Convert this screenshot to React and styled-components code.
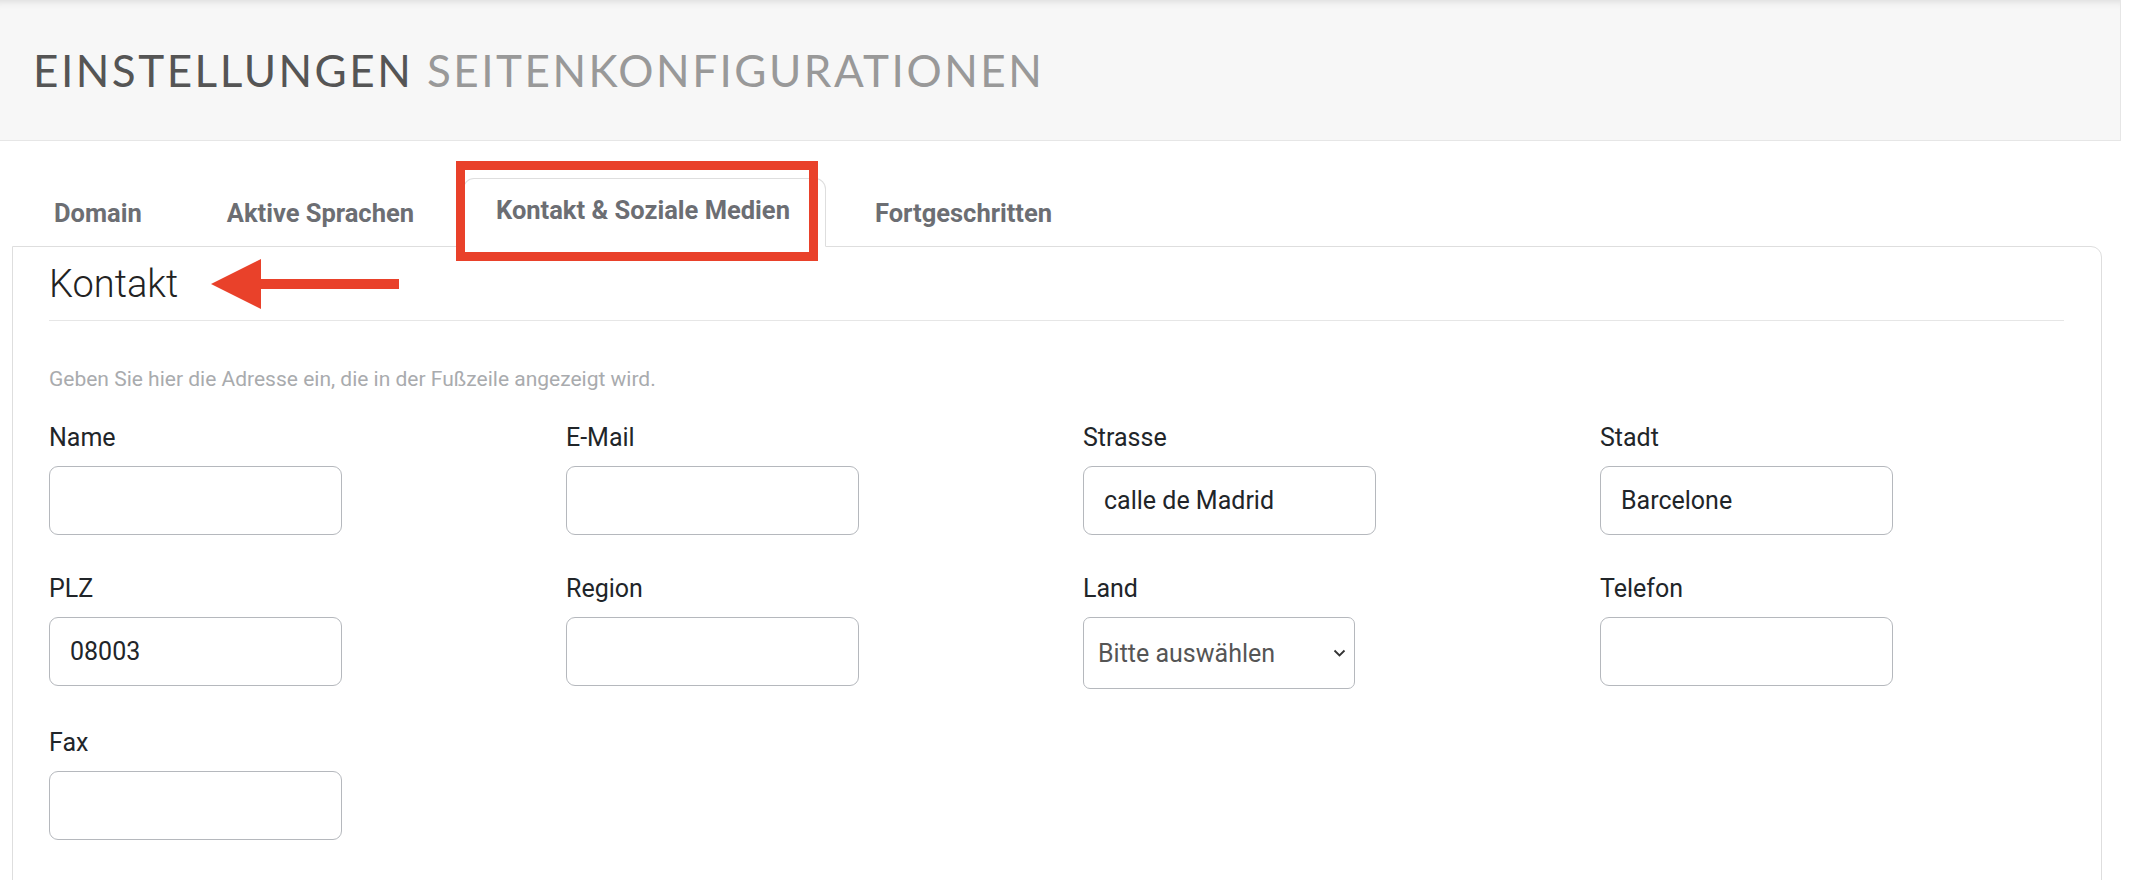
import styled, { createGlobalStyle } from "styled-components"

const GlobalStyle = createGlobalStyle`
    *{
        box-sizing:border-box;
    }
    body{
        margin:0;
        background:#fff;
        font-family:Roboto, "Liberation Sans", sans-serif;
        color:#212529;
    }
`

const PageHeader = styled.header`
    height:141px;
    margin-right:11px;
    background:#f7f7f7;
    border-bottom:1px solid #e6e6e6;
    border-right:1px solid #e6e6e6;
    box-shadow:inset 0 9px 9px -8px rgba(0,0,0,0.13);
    display:flex;
    align-items:center;
    padding-left:33px;
`
const PageTitle = styled.h1`
    margin:0;
    font-family:Lato, "Open Sans", sans-serif;
    font-weight:400;
    font-size:44px;
    letter-spacing:2.5px;
    color:#555;
    span{
        color:#999;
    }
`
const Main = styled.main`
    padding:37px 30px 0 12px;
`
const TabList = styled.ul`
    display:flex;
    list-style:none;
    margin:0;
    padding:0 0 0 6px;
    gap:13px;
`
const Tab = styled.li`
    position:relative;
    height:69px;
    margin-bottom:-1px;
    padding:${p => p.active ? "0 35px 6px 32px" : "0 35px"};
    display:flex;
    align-items:center;
    font-size:25.5px;
    font-weight:700;
    color:#6c6e73;
    border:1px solid ${p => p.active ? "#dedede" : "transparent"};
    border-bottom-color:${p => p.active ? "#fff" : "transparent"};
    border-radius:11px 11px 0 0;
    background:${p => p.active ? "#fff" : "transparent"};
`
const Highlight = styled.span`
    position:absolute;
    left:-8px;
    top:-18px;
    width:362px;
    height:100px;
    border:9px solid #e9412a;
    pointer-events:none;
`
const Panel = styled.section`
    border:1px solid #dedede;
    border-radius:0 11px 0 0;
    padding:15px 37px 60px 36px;
`
const SectionHead = styled.div`
    display:flex;
    align-items:center;
    padding-bottom:14px;
    border-bottom:1px solid #e6e6e6;
`
const SectionTitle = styled.h2`
    margin:0;
    font-size:38px;
    line-height:44px;
    font-weight:300;
    color:#222;
`
const Arrow = styled.svg`
    margin:-4px 0 -4px 33px;
    display:block;
`
const Hint = styled.p`
    margin:46px 0 31px;
    font-size:21px;
    line-height:25px;
    color:#a9abae;
`
const FieldGrid = styled.div`
    display:grid;
    grid-template-columns:repeat(4, 517px);
    row-gap:39px;
`
const Field = styled.div`
    display:flex;
    flex-direction:column;
`
const Label = styled.label`
    font-size:25px;
    line-height:30px;
    margin-bottom:13px;
    color:#212529;
`
const TextInput = styled.input`
    width:293px;
    height:69px;
    border:1px solid #b5b8bd;
    border-radius:9px;
    padding:0 20px;
    font-family:Roboto, "Liberation Sans", sans-serif;
    font-size:25px;
    color:#212529;
    background:#fff;
    outline:none;
`
const SelectWrap = styled.div`
    position:relative;
    width:272px;
`
const Select = styled.select`
    width:272px;
    height:72px;
    appearance:none;
    border:1px solid #b5b8bd;
    border-radius:7px;
    padding:0 14px;
    font-family:Roboto, "Liberation Sans", sans-serif;
    font-size:25px;
    color:#555;
    background:#fff;
    outline:none;
`
const Chevron = styled.svg`
    position:absolute;
    right:9px;
    top:32px;
    pointer-events:none;
`

const fields = [
    {label:"Name", value:""},
    {label:"E-Mail", value:""},
    {label:"Strasse", value:"calle de Madrid"},
    {label:"Stadt", value:"Barcelone"},
    {label:"PLZ", value:"08003"},
    {label:"Region", value:""},
    {label:"Land", select:true},
    {label:"Telefon", value:""},
    {label:"Fax", value:""},
]

const tabs = ["Domain","Aktive Sprachen","Kontakt & Soziale Medien","Fortgeschritten"]

const App = () => {
    return (
        <>
            <GlobalStyle/>
            <PageHeader>
                <PageTitle>EINSTELLUNGEN <span>SEITENKONFIGURATIONEN</span></PageTitle>
            </PageHeader>
            <Main>
                <TabList>
                    {tabs.map((t) => (
                        <Tab key={t} active={t === "Kontakt & Soziale Medien" ? 1 : 0}>
                            {t}
                            {t === "Kontakt & Soziale Medien" ? <Highlight/> : null}
                        </Tab>
                    ))}
                </TabList>
                <Panel>
                    <SectionHead>
                        <SectionTitle>Kontakt</SectionTitle>
                        <Arrow width="188" height="50" viewBox="0 0 188 50">
                            <polygon points="0,25 50,0 50,20 188,20 188,30 50,30 50,50" fill="#e9412a"/>
                        </Arrow>
                    </SectionHead>
                    <Hint>Geben Sie hier die Adresse ein, die in der Fußzeile angezeigt wird.</Hint>
                    <FieldGrid>
                        {fields.map((f) => (
                            <Field key={f.label}>
                                <Label>{f.label}</Label>
                                {f.select ? (
                                    <SelectWrap>
                                        <Select defaultValue="">
                                            <option value="">Bitte auswählen</option>
                                        </Select>
                                        <Chevron width="13" height="8" viewBox="0 0 13 8">
                                            <polyline points="1.5,1.5 6.5,6.5 11.5,1.5" fill="none" stroke="#333" strokeWidth="1.8"/>
                                        </Chevron>
                                    </SelectWrap>
                                ) : (
                                    <TextInput type="text" defaultValue={f.value}/>
                                )}
                            </Field>
                        ))}
                    </FieldGrid>
                </Panel>
            </Main>
        </>
    )
}

export default App
